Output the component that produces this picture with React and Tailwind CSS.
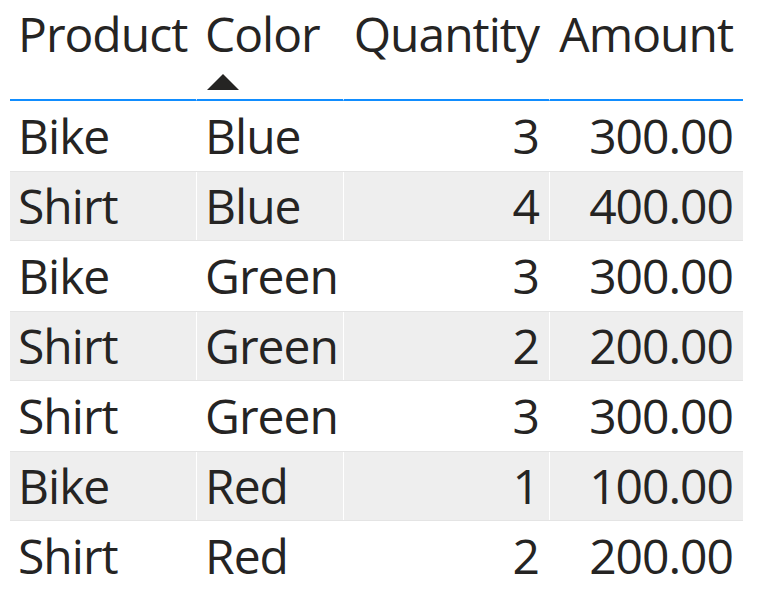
import React from 'react';

const rows = [
  { product: 'Bike', color: 'Blue', qty: 3, amount: '300.00' },
  { product: 'Shirt', color: 'Blue', qty: 4, amount: '400.00' },
  { product: 'Bike', color: 'Green', qty: 3, amount: '300.00' },
  { product: 'Shirt', color: 'Green', qty: 2, amount: '200.00' },
  { product: 'Shirt', color: 'Green', qty: 3, amount: '300.00' },
  { product: 'Bike', color: 'Red', qty: 1, amount: '100.00' },
  { product: 'Shirt', color: 'Red', qty: 2, amount: '200.00' },
];

const App = () => {
  return (
    <div className="w-[766px] h-[601px] bg-white pl-[10px] text-[#252423] font-['Open_Sans',sans-serif] text-[48px] leading-none tracking-[-1px]">
      <div className="w-[733px]">
        {/* Header */}
        <div className="grid grid-cols-[187px_147px_206px_193px] h-[101px]">
          <div className="pl-[8px] pt-[10px] border-b-2 border-[#118dff] border-r border-r-white">Product</div>
          <div className="pl-[8px] pt-[10px] border-b-2 border-[#118dff] border-r border-r-white flex flex-col">
            <span>Color</span>
            <svg width="32" height="16" viewBox="0 0 32 16" className="mt-[16px] ml-[2px]">
              <polygon points="0,16 16,0 32,16" fill="#252423" />
            </svg>
          </div>
          <div className="pr-[10px] pt-[10px] border-b-2 border-[#118dff] border-r border-r-white text-right">Quantity</div>
          <div className="pr-[10px] pt-[10px] border-b-2 border-[#118dff] text-right">Amount</div>
        </div>

        {/* Rows */}
        {rows.map((r, i) => (
          <div
            key={i}
            className={`grid grid-cols-[187px_147px_206px_193px] h-[70px] ${i % 2 === 1 ? 'bg-[#eeeeee] border-t border-b border-[#e4e4e4]' : ''}`}
          >
            <div className="pl-[8px] flex items-center border-r border-white">{r.product}</div>
            <div className="pl-[8px] flex items-center border-r border-white">{r.color}</div>
            <div className="pr-[10px] flex items-center justify-end border-r border-white">{r.qty}</div>
            <div className="pr-[10px] flex items-center justify-end">{r.amount}</div>
          </div>
        ))}
      </div>
    </div>
  );
};

export default App;
